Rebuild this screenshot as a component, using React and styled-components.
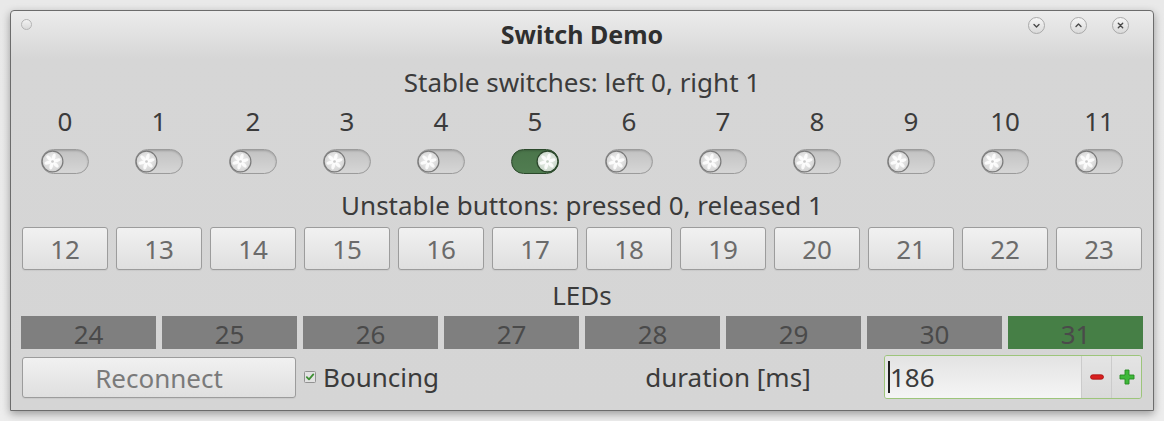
import React, { useId } from "react";
import styled, { createGlobalStyle } from "styled-components";

const GlobalStyle = createGlobalStyle`
  html, body { margin: 0; padding: 0; background: #ebebeb; }
  body { font-family: "Noto Sans", "Open Sans", sans-serif; color: #3b3b3b; }
  * { box-sizing: border-box; }
`;

const Page = styled.div`
  width: 1164px;
  height: 421px;
  padding: 10px;
  background: linear-gradient(#e9e9e9, #ededed);
`;

const Window = styled.div`
  width: 1144px;
  height: 401px;
  border: 1px solid #6c6c6c;
  border-radius: 4px 4px 0 0;
  background: linear-gradient(#ececec 0px, #d6d6d6 48px, #d5d5d5 100%);
  box-shadow: 0 3px 9px rgba(0, 0, 0, 0.35);
  display: flex;
  flex-direction: column;
`;

const TitleBar = styled.div`
  height: 47px;
  display: grid;
  grid-template-columns: 1fr auto 1fr;
  align-items: center;
`;

const MenuDot = styled.div`
  align-self: start;
  justify-self: start;
  margin: 8px 0 0 10px;
  width: 11px;
  height: 11px;
  border-radius: 50%;
  border: 1px solid #b4b4b4;
  background: linear-gradient(#f2f2f2, #d9d9d9);
`;

const Title = styled.div`
  font-weight: 700;
  font-size: 25px;
  line-height: 1;
  color: #2f2f2f;
  padding-top: 0px;
`;

const WinButtons = styled.div`
  align-self: start;
  justify-self: end;
  margin: 6px 24px 0 0;
  display: flex;
  gap: 25px;
`;

const WinButton = styled.div`
  width: 17px;
  height: 17px;
  border-radius: 50%;
  border: 1px solid #a9a9a9;
  background: linear-gradient(#f6f6f6, #dadada);
  display: flex;
  align-items: center;
  justify-content: center;
`;

const Content = styled.div`
  padding: 0 11px;
  display: flex;
  flex-direction: column;
`;

const SectionLabel = styled.div`
  height: ${(p) => p.$h}px;
  padding-top: ${(p) => p.$pt || 0}px;
  display: flex;
  align-items: center;
  justify-content: center;
  font-size: 26px;
  line-height: 1;
  color: #3b3b3b;
`;

const Grid12 = styled.div`
  display: grid;
  grid-template-columns: repeat(12, 1fr);
  column-gap: 8px;
  height: ${(p) => p.$h}px;
  margin-top: ${(p) => p.$mt || 0}px;
`;

const NumberCell = styled.div`
  display: flex;
  align-items: center;
  justify-content: center;
  font-size: 26px;
  line-height: 1;
  color: #3b3b3b;
`;

const SwitchCell = styled.div`
  display: flex;
  justify-content: center;
  padding-top: 13px;
`;

const Track = styled.div`
  width: 48px;
  height: 25px;
  border-radius: 13px;
  border: 1px solid ${(p) => (p.$on ? "#2b492b" : "#9b9b9b")};
  background: ${(p) =>
    p.$on
      ? "linear-gradient(#4a754a, #517d51)"
      : "linear-gradient(#c2c2c2, #d6d6d6)"};
  box-shadow: inset 0 1px 2px rgba(0, 0, 0, 0.18);
  display: flex;
  align-items: center;
  justify-content: ${(p) => (p.$on ? "flex-end" : "flex-start")};
`;

const PushButton = styled.div`
  border: 1px solid #9c9c9c;
  border-radius: 3px;
  background: linear-gradient(#f1f1f1, #dfdfdf);
  box-shadow: 0 1px 1px rgba(0, 0, 0, 0.06);
  display: flex;
  align-items: center;
  justify-content: center;
  font-size: 26px;
  line-height: 1;
  color: #6b6b6b;
`;

const LedRow = styled.div`
  display: flex;
  gap: 6px;
  height: 33px;
  margin: 0 -1px;
`;

const Led = styled.div`
  flex: 1;
  background: ${(p) => (p.$on ? "#467f46" : "#7f7f7f")};
  display: flex;
  align-items: center;
  justify-content: center;
  font-size: 26px;
  line-height: 1;
  color: #4a4a4a;
  padding-top: 2px;
`;

const ReconnectButton = styled(PushButton)`
  grid-column: 1 / 4;
  height: 41px;
  margin-top: 2px;
  color: #7a7a7a;
`;

const CheckWrap = styled.div`
  grid-column: 4 / 7;
  display: flex;
  align-items: center;
  gap: 7px;
  font-size: 26px;
  line-height: 1;
  color: #3b3b3b;
  padding-bottom: 0px;
`;

const DurationLabel = styled.div`
  grid-column: 7 / 10;
  display: flex;
  align-items: center;
  justify-content: center;
  padding-left: 10px;
  font-size: 26px;
  line-height: 1;
  color: #3b3b3b;
`;

const SpinBox = styled.div`
  grid-column: 10 / 13;
  margin-left: 16px;
  height: 44px;
  border: 1px solid #9dc57b;
  border-radius: 3px;
  display: flex;
  overflow: hidden;
`;

const SpinInput = styled.div`
  flex: 1;
  background: linear-gradient(#e3e3e3, #f5f5f5);
  display: flex;
  align-items: center;
  padding-left: 3px;
  font-size: 26px;
  line-height: 1;
  color: #3b3b3b;
`;

const Caret = styled.span`
  display: inline-block;
  width: 2px;
  height: 32px;
  background: #1e1e1e;
  margin-right: 0px;
`;

const SpinButton = styled.div`
  width: 30px;
  border-left: 1px solid #cbcbcb;
  background: linear-gradient(#e4e4e4, #dadada);
  display: flex;
  align-items: center;
  justify-content: center;
`;

function Knob({ on }) {
  const id = useId().replace(/:/g, "");
  const petals = [0, 60, 120, 180, 240, 300];
  return (
    <svg width="23" height="23" viewBox="0 0 23 23" style={{ margin: "0 -1px" }}>
      <defs>
        <radialGradient id={`g${id}`} cx="50%" cy="45%" r="55%">
          <stop offset="0" stopColor={on ? "#eef3ee" : "#f3f3f3"} />
          <stop offset="1" stopColor={on ? "#c9d6c9" : "#d2d2d2"} />
        </radialGradient>
      </defs>
      <circle
        cx="11.5"
        cy="11.5"
        r="10.4"
        fill={`url(#g${id})`}
        stroke={on ? "#2a452a" : "#7b7b7b"}
        strokeWidth="1.2"
      />
      {petals.map((a) => (
        <ellipse
          key={a}
          cx="11.5"
          cy="6.8"
          rx="1.7"
          ry="3.6"
          fill="#ffffff"
          opacity="0.85"
          transform={`rotate(${a + 15} 11.5 11.5)`}
        />
      ))}
      <circle cx="11.5" cy="11.5" r="1.3" fill={on ? "#c3cfc3" : "#cbcbcb"} />
    </svg>
  );
}

function Switch({ on }) {
  return (
    <Track $on={on}>
      <Knob on={on} />
    </Track>
  );
}

const chevron = (d) => (
  <svg width="9" height="9" viewBox="0 0 9 9">
    <path d={d} fill="none" stroke="#4a4a4a" strokeWidth="1.4" strokeLinecap="round" strokeLinejoin="round" />
  </svg>
);

export default function App() {
  const cols = Array.from({ length: 12 }, (_, i) => i);
  const leds = Array.from({ length: 8 }, (_, i) => 24 + i);
  return (
    <>
      <GlobalStyle />
      <Page>
        <Window>
          <TitleBar>
            <MenuDot />
            <Title>Switch Demo</Title>
            <WinButtons>
              <WinButton>{chevron("M2 3.5 L4.5 6 L7 3.5")}</WinButton>
              <WinButton>{chevron("M2 5.5 L4.5 3 L7 5.5")}</WinButton>
              <WinButton>{chevron("M2.3 2.3 L6.7 6.7 M6.7 2.3 L2.3 6.7")}</WinButton>
            </WinButtons>
          </TitleBar>
          <Content>
            <SectionLabel $h={48}>Stable switches: left 0, right 1</SectionLabel>
            <Grid12 $h={30}>
              {cols.map((i) => (
                <NumberCell key={i}>{i}</NumberCell>
              ))}
            </Grid12>
            <Grid12 $h={51}>
              {cols.map((i) => (
                <SwitchCell key={i}>
                  <Switch on={i === 5} />
                </SwitchCell>
              ))}
            </Grid12>
            <SectionLabel $h={36}>Unstable buttons: pressed 0, released 1</SectionLabel>
            <Grid12 $h={43} $mt={4}>
              {cols.map((i) => (
                <PushButton key={i}>{12 + i}</PushButton>
              ))}
            </Grid12>
            <SectionLabel $h={46} $pt={4}>LEDs</SectionLabel>
            <LedRow>
              {leds.map((n) => (
                <Led key={n} $on={n === 31}>{n}</Led>
              ))}
            </LedRow>
            <Grid12 $h={44} $mt={6}>
              <ReconnectButton>Reconnect</ReconnectButton>
              <CheckWrap>
                <svg width="12" height="12" viewBox="0 0 12 12">
                  <rect x="0.5" y="0.5" width="11" height="11" rx="1" fill="#e2e2e2" stroke="#929292" />
                  <path d="M2.8 6.2 L5 8.4 L9.3 3.4" fill="none" stroke="#3d8f33" strokeWidth="1.8" strokeLinecap="round" strokeLinejoin="round" />
                </svg>
                <span>Bouncing</span>
              </CheckWrap>
              <DurationLabel>duration [ms]</DurationLabel>
              <SpinBox>
                <SpinInput>
                  <Caret />
                  186
                </SpinInput>
                <SpinButton>
                  <svg width="14" height="6" viewBox="0 0 14 6">
                    <rect x="0.5" y="0.8" width="13" height="4.4" rx="2.2" fill="#d81f1f" stroke="#a81212" strokeWidth="0.8" />
                  </svg>
                </SpinButton>
                <SpinButton>
                  <svg width="16" height="16" viewBox="0 0 16 16">
                    <path
                      d="M6 1 H10 V6 H15 V10 H10 V15 H6 V10 H1 V6 H6 Z"
                      fill="#3fb83a"
                      stroke="#278a22"
                      strokeWidth="0.9"
                      strokeLinejoin="round"
                    />
                  </svg>
                </SpinButton>
              </SpinBox>
            </Grid12>
          </Content>
        </Window>
      </Page>
    </>
  );
}
